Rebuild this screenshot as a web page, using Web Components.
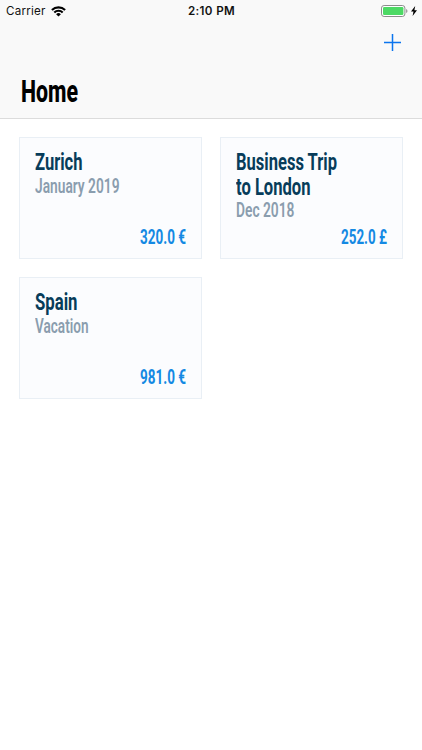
<!DOCTYPE html>
<html lang="en">
<head>
  <meta charset="utf-8">
  <meta name="viewport" content="width=device-width, initial-scale=1">
  <title>Home</title>
  <style>
    body {
      margin: 0;
      background: #fff;
      font-family: Roboto, "Liberation Sans", sans-serif;
    }
  </style>
</head>
<body>
  <trips-app>
    <status-bar slot="header" carrier="Carrier" time="2:10 PM"></status-bar>
    <nav-bar slot="header"><fit-text width="57">Home</fit-text></nav-bar>
    <trip-card>
      <fit-text slot="title" width="47.5">Zurich</fit-text>
      <fit-text slot="subtitle" width="84.5">January 2019</fit-text>
      <fit-text slot="amount" width="46">320.0 €</fit-text>
    </trip-card>
    <trip-card>
      <fit-text slot="title" width="101">Business Trip</fit-text>
      <fit-text slot="title" width="74.5">to London</fit-text>
      <fit-text slot="subtitle" width="58.5">Dec 2018</fit-text>
      <fit-text slot="amount" width="46">252.0 £</fit-text>
    </trip-card>
    <trip-card>
      <fit-text slot="title" width="42.5">Spain</fit-text>
      <fit-text slot="subtitle" width="53.5">Vacation</fit-text>
      <fit-text slot="amount" width="46">981.0 €</fit-text>
    </trip-card>
  </trips-app>

  <script>
    class BaseElement extends HTMLElement {
      constructor() {
        super();
        const template = document.createElement("template");
        template.innerHTML = this.constructor.html;
        this._shadowRoot = this.attachShadow({ mode: "open" });
        this._shadowRoot.appendChild(template.content.cloneNode(true));
      }
    }

    // Condenses one line of text to the number of pixels in "width"
    class FitText extends BaseElement {
      static html = `<style>
        :host {
          display: block;
          white-space: nowrap;
        }

        span {
          display: inline-block;
          transform-origin: 0 50%;
        }
      </style>
      <span><slot></slot></span>`;

      connectedCallback() {
        const width = Number(this.getAttribute("width"));
        const $span = this._shadowRoot.querySelector("span");
        this.style.width = width + "px";
        const natural = $span.getBoundingClientRect().width;
        $span.style.transform = `scaleX(${width / natural})`;
      }
    }

    class StatusBar extends BaseElement {
      static html = `<style>
        :host {
          display: grid;
          grid-template-columns: 1fr auto 1fr;
          align-items: center;
          height: 22px;
          padding: 0 5px 0 6px;
          font: 11.6px/22px Inter, sans-serif;
          color: #111;
        }

        .left, .right {
          display: flex;
          align-items: center;
        }

        .left {
          gap: 5px;
          letter-spacing: 0.22px;
        }

        .right {
          justify-content: flex-end;
          gap: 3px;
        }

        #time {
          font-weight: 600;
          letter-spacing: 0.35px;
        }

        svg {
          display: block;
        }
      </style>
      <div class="left">
        <span id="carrier"></span>
        <svg width="15" height="11" viewBox="0 0 15 11" fill="none" stroke="#000" stroke-width="2.1">
          <path d="M.9 4.1a9.4 9.4 0 0 1 13.2 0"/>
          <path d="M3.3 6.5a6 6 0 0 1 8.4 0"/>
          <path d="M7.5 10.6 5.1 8.3a3.4 3.4 0 0 1 4.8 0z" fill="#000" stroke="none"/>
        </svg>
      </div>
      <span id="time"></span>
      <div class="right">
        <svg width="27" height="12" viewBox="0 0 27 12">
          <rect x=".5" y=".5" width="23.4" height="11" rx="2.6" fill="#fff" stroke="#8c8c8c"/>
          <rect x="2" y="2" width="20.4" height="8" rx="1.2" fill="#4cd964"/>
          <path d="M25.2 4v4c1.7-.6 1.7-3.4 0-4z" fill="#8c8c8c"/>
        </svg>
        <svg width="6" height="10" viewBox="0 0 6 10">
          <path d="M4.2 0 0 5.6h2.5L1.6 10 6 4.2H3.4z" fill="#000"/>
        </svg>
      </div>`;

      connectedCallback() {
        ["carrier", "time"].forEach((name) => {
          this._shadowRoot.getElementById(name).textContent = this.getAttribute(name);
        });
      }
    }

    class NavBar extends BaseElement {
      static html = `<style>
        :host {
          display: flex;
          flex-direction: column;
          justify-content: space-between;
          height: 96px;
          box-sizing: border-box;
          padding: 12px 21px 9px;
          color: #000;
          font-size: 32px;
          font-weight: 800;
          line-height: 36px;
        }

        button {
          align-self: flex-end;
          padding: 0;
          border: 0;
          background: none;
        }

        svg {
          display: block;
        }
      </style>
      <button aria-label="Add">
        <svg width="17" height="17" viewBox="0 0 17 17" stroke="#0b75ee" stroke-width="1.5">
          <path d="M8.5 0v17M0 8.5h17"/>
        </svg>
      </button>
      <slot></slot>`;
    }

    class TripCard extends BaseElement {
      static html = `<style>
        :host {
          display: flex;
          flex-direction: column;
          box-sizing: border-box;
          height: 122px;
          padding: 12px 15px 10px;
          border: 1px solid #e9eff5;
          background: #fbfcfe;
          font-size: 20px;
          line-height: 22px;
          font-weight: 700;
        }

        .title {
          color: #073c5a;
          font-size: 24.5px;
          line-height: 24.5px;
        }

        .subtitle {
          color: #8a9dae;
          font-weight: 600;
        }

        .amount {
          margin-top: auto;
          align-self: flex-end;
          color: #1489e3;
        }
      </style>
      <div class="title"><slot name="title"></slot></div>
      <div class="subtitle"><slot name="subtitle"></slot></div>
      <div class="amount"><slot name="amount"></slot></div>`;
    }

    class TripsApp extends BaseElement {
      static html = `<style>
        :host {
          display: block;
          min-height: 100vh;
        }

        header {
          background: #f9f9f9;
          border-bottom: 1px solid #dcdcdc;
        }

        main {
          display: grid;
          grid-template-columns: 1fr 1fr;
          gap: 18px 18.5px;
          padding: 18px 19px 18px 18.5px;
        }
      </style>
      <header><slot name="header"></slot></header>
      <main><slot></slot></main>`;
    }

    customElements.define("trips-app", TripsApp);
    customElements.define("status-bar", StatusBar);
    customElements.define("nav-bar", NavBar);
    customElements.define("trip-card", TripCard);
    customElements.define("fit-text", FitText);
  </script>
</body>
</html>
